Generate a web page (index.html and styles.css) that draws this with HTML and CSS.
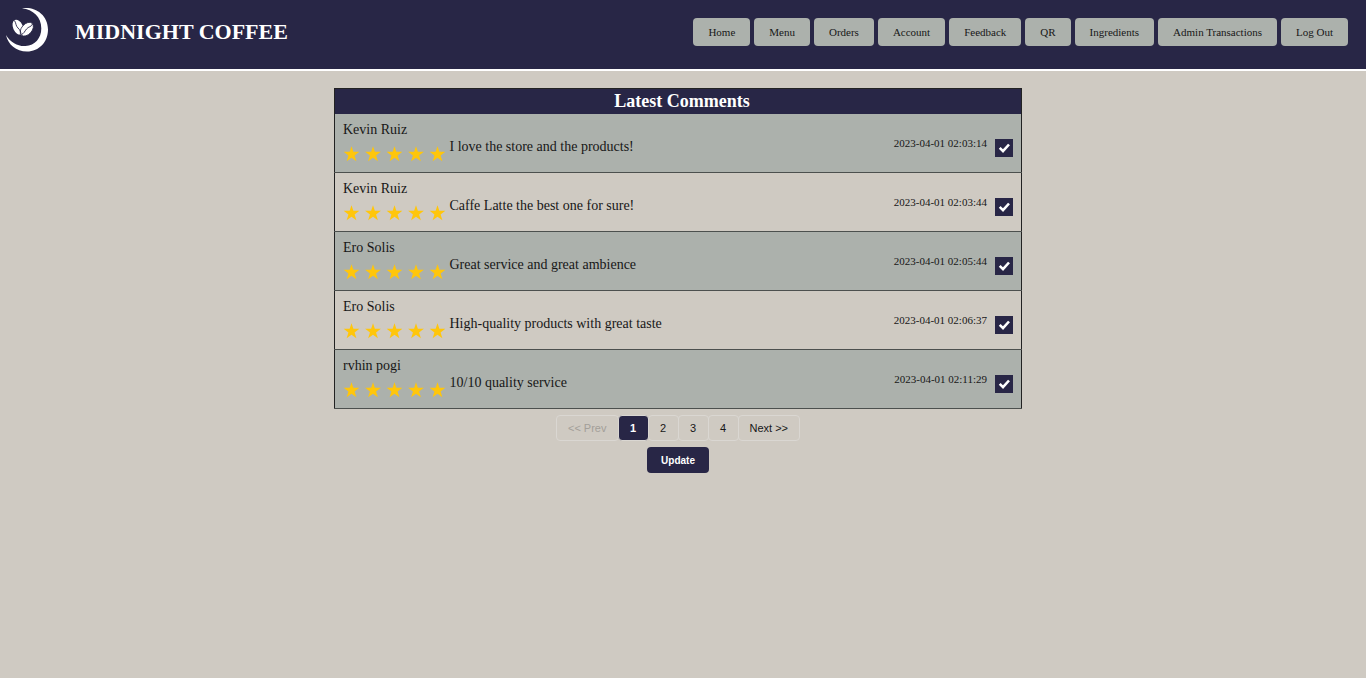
FILE: index.html
```html
<!DOCTYPE html>
<html lang="en">
<head>
<meta charset="utf-8">
<meta name="viewport" content="width=device-width, initial-scale=1">
<title>Midnight Coffee - Feedback</title>
<link rel="stylesheet" href="styles.css">
</head>
<body>
<svg class="sprite" aria-hidden="true">
  <symbol id="star" viewBox="0 0 24 24"><path fill="currentColor" d="M12 .2l2.800 8.500h9l-7.200 5.400 2.700 8.700-7.300-5.300-7.300 5.300 2.700-8.700L.2 8.700h9z"/></symbol>
  <symbol id="stars" viewBox="0 0 104 16">
    <use href="#star" x="0.500" width="16" height="16"/>
    <use href="#star" x="22" width="16" height="16"/>
    <use href="#star" x="43.500" width="16" height="16"/>
    <use href="#star" x="65" width="16" height="16"/>
    <use href="#star" x="86.500" width="16" height="16"/>
  </symbol>
  <symbol id="check" viewBox="0 0 18 18"><path fill="none" stroke="#fff" stroke-width="2.600" d="M4.700 8.900l3.300 3.200L14 5.500"/></symbol>
</svg>
<header class="topbar">
  <svg class="logo" viewBox="0 0 44 46" aria-hidden="true">
    <path fill="#fff" d="M16 1.300C28-1 42 7 42 22.500 42 35 33 44.500 21 44.500 10 44.500 2 37.500 0 28c5 8 12 11.500 19.500 11C29 38.500 35.300 31 35.300 21.500 35.300 10 27 2.500 16 1.300z"/>
    <ellipse cx="12" cy="20.200" rx="4.900" ry="7.800" transform="rotate(-24 12 20.200)" fill="#fff"/>
    <ellipse cx="20.800" cy="22.200" rx="5.200" ry="8" transform="rotate(42 20.800 22.200)" fill="#fff" stroke="#282646" stroke-width=".8"/>
    <path fill="none" stroke="#282646" stroke-width=".9" d="M8.500 13.500c2 3.500 1 5 3.500 7.500s2.500 3.500 3 6M26.500 17c-1 3-4 2.500-6 5s-2.500 4.500-5 5.500"/>
  </svg>
  <h1 class="brand">MIDNIGHT COFFEE</h1>
  <nav class="nav">
    <a class="nav-link" href="#">Home</a>
    <a class="nav-link" href="#">Menu</a>
    <a class="nav-link" href="#">Orders</a>
    <a class="nav-link" href="#">Account</a>
    <a class="nav-link" href="#">Feedback</a>
    <a class="nav-link" href="#">QR</a>
    <a class="nav-link" href="#">Ingredients</a>
    <a class="nav-link" href="#">Admin Transactions</a>
    <a class="nav-link" href="#">Log Out</a>
  </nav>
</header>
<main class="content">
  <form class="feedback">
    <table class="comments">
      <thead><tr><th colspan="4">Latest Comments</th></tr></thead>
      <tbody>
        <tr>
          <td class="author">Kevin Ruiz<svg class="rating" role="img" aria-label="5 stars"><use href="#stars"/></svg></td>
          <td class="comment">I love the store and the products!</td>
          <td class="date">2023-04-01 02:03:14</td>
          <td class="pick"><label class="tick"><input type="checkbox" aria-label="Show comment 1" checked><svg><use href="#check"/></svg></label></td>
        </tr>
        <tr>
          <td class="author">Kevin Ruiz<svg class="rating" role="img" aria-label="5 stars"><use href="#stars"/></svg></td>
          <td class="comment">Caffe Latte the best one for sure!</td>
          <td class="date">2023-04-01 02:03:44</td>
          <td class="pick"><label class="tick"><input type="checkbox" aria-label="Show comment 2" checked><svg><use href="#check"/></svg></label></td>
        </tr>
        <tr>
          <td class="author">Ero Solis<svg class="rating" role="img" aria-label="5 stars"><use href="#stars"/></svg></td>
          <td class="comment">Great service and great ambience</td>
          <td class="date">2023-04-01 02:05:44</td>
          <td class="pick"><label class="tick"><input type="checkbox" aria-label="Show comment 3" checked><svg><use href="#check"/></svg></label></td>
        </tr>
        <tr>
          <td class="author">Ero Solis<svg class="rating" role="img" aria-label="5 stars"><use href="#stars"/></svg></td>
          <td class="comment">High-quality products with great taste</td>
          <td class="date">2023-04-01 02:06:37</td>
          <td class="pick"><label class="tick"><input type="checkbox" aria-label="Show comment 4" checked><svg><use href="#check"/></svg></label></td>
        </tr>
        <tr>
          <td class="author">rvhin pogi<svg class="rating" role="img" aria-label="5 stars"><use href="#stars"/></svg></td>
          <td class="comment">10/10 quality service</td>
          <td class="date">2023-04-01 02:11:29</td>
          <td class="pick"><label class="tick"><input type="checkbox" aria-label="Show comment 5" checked><svg><use href="#check"/></svg></label></td>
        </tr>
      </tbody>
    </table>
    <div class="pager">
      <button type="button" class="page" disabled>&lt;&lt; Prev</button>
      <button type="button" class="page current">1</button>
      <button type="button" class="page">2</button>
      <button type="button" class="page">3</button>
      <button type="button" class="page">4</button>
      <button type="button" class="page">Next &gt;&gt;</button>
    </div>
    <button type="submit" class="update">Update</button>
  </form>
</main>
</body>
</html>
```
FILE: styles.css
```css
* { box-sizing: border-box; }
body {
  margin: 0;
  background: #cfcac2;
  color: #171717;
  font-family: "Liberation Serif", "Times New Roman", serif;
  font-size: 14px;
}
.sprite { position: absolute; width: 0; height: 0; }
.topbar {
  display: flex;
  align-items: flex-start;
  padding: 7px 18px 16px 6px;
  background: #282646;
  border-bottom: 2px solid #fff;
}
.logo { width: 44px; height: 46px; }
.brand {
  margin: 12px 0 0 25px;
  color: #fff;
  font-size: 22px;
  line-height: 26px;
}
.nav {
  display: flex;
  gap: 4px;
  margin: 11px 0 0 auto;
}
.nav-link {
  padding: 0 15px;
  border-radius: 4px;
  background: #acb1ac;
  color: #171717;
  font-size: 11px;
  line-height: 28px;
  text-decoration: none;
}
.content { padding: 17px 10px 16px 0; }
.feedback {
  display: flex;
  flex-direction: column;
  align-items: center;
  max-width: 688px;
  margin: 0 auto;
}
.comments {
  width: 100%;
  border: 1px solid #222;
  border-collapse: collapse;
}
.comments th {
  padding: 0 0 0 8px;
  background: #282646;
  color: #fff;
  font-size: 18px;
  line-height: 25px;
}
.comments tbody tr { border-bottom: 1px solid #4c504e; }
.comments tbody tr:nth-child(odd) { background: #acb1ac; }
.comments td { padding: 0; line-height: 16px; }
.comments .author { width: 115px; padding: 8px 0 10px 8px; }
.rating { display: block; width: 104px; height: 16px; margin-top: 8px; color: #ffc60b; }
.comments .comment { padding-top: 8px; }
.comments .date { font-size: 11px; text-align: right; }
.comments .pick { width: 34px; padding: 10px 8px 0; }
.tick { display: block; position: relative; width: 18px; height: 18px; }
.tick input {
  appearance: none;
  display: block;
  width: 18px;
  height: 18px;
  margin: 0;
  background: #282646;
}
.tick svg { position: absolute; inset: 0; width: 18px; height: 18px; pointer-events: none; }
.tick input:not(:checked) + svg { display: none; }
.pager { display: flex; margin-top: 6px; }
.page {
  height: 26px;
  padding: 0 11px;
  border: 1px solid #dad7d2;
  border-radius: 4px;
  background: transparent;
  color: #171717;
  font: 11px "Liberation Sans", Arial, sans-serif;
}
.page + .page { margin-left: -1px; min-width: 31px; }
.page:disabled { color: #a39f99; }
.page.current { background: #282646; color: #fff; font-weight: bold; }
.update {
  height: 26px;
  margin-top: 6px;
  padding: 0 14px;
  border: 0;
  border-radius: 4px;
  background: #282646;
  color: #fff;
  font: bold 10px "Liberation Sans", Arial, sans-serif;
}
```
